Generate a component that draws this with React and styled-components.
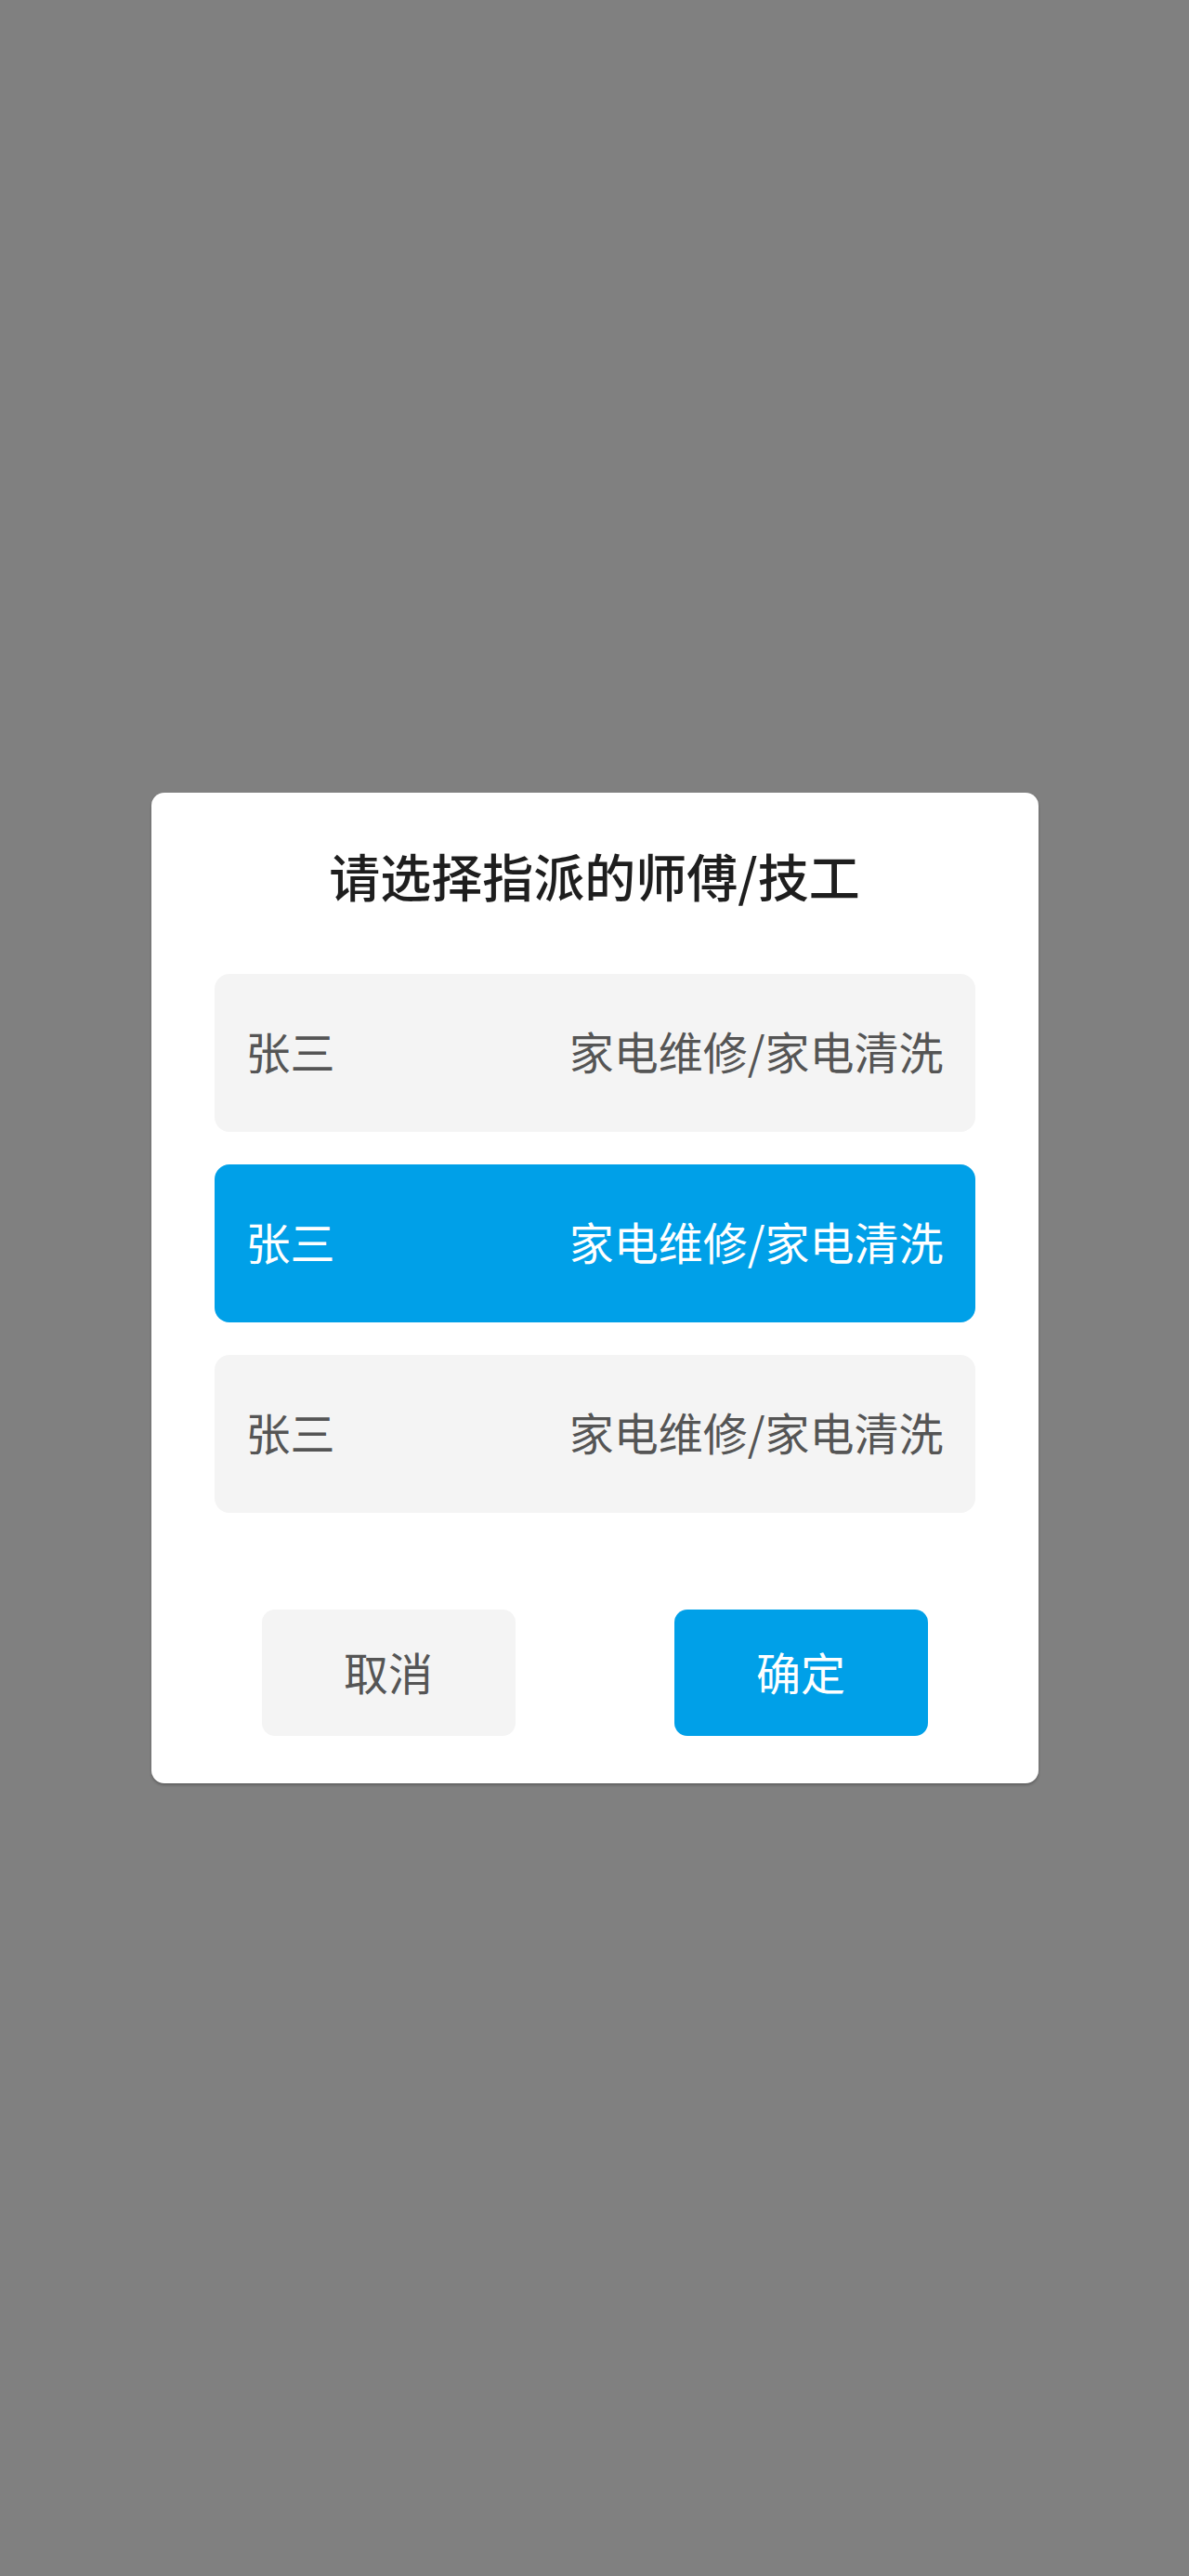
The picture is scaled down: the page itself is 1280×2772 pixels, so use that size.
import React, { useState } from "react";
import styled, { createGlobalStyle } from "styled-components";

const GlobalStyle = createGlobalStyle`
  html, body {
    margin: 0;
    padding: 0;
  }
  body {
    font-family: "Noto Sans CJK SC", "Noto Sans", sans-serif;
    background: #808080;
  }
`;

const workers = [
  { id: 1, name: "张三", skill: "家电维修/家电清洗" },
  { id: 2, name: "张三", skill: "家电维修/家电清洗" },
  { id: 3, name: "张三", skill: "家电维修/家电清洗" },
];

const App = () => {
  const [selected, setSelected] = useState(2);

  return (
    <>
      <GlobalStyle />
      <Mask>
        <Dialog>
          <Title>请选择指派的师傅/技工</Title>
          <List>
            {workers.map((w) => (
              <Row
                key={w.id}
                $active={selected === w.id}
                onClick={() => setSelected(w.id)}
              >
                <span>{w.name}</span>
                <span>{w.skill}</span>
              </Row>
            ))}
          </List>
          <Footer>
            <Button>取消</Button>
            <Button $primary>确定</Button>
          </Footer>
        </Dialog>
      </Mask>
    </>
  );
};

const Mask = styled.div`
  min-height: 100vh;
  background: #808080;
  display: flex;
  align-items: center;
  justify-content: center;
`;

const Dialog = styled.div`
  width: 955px;
  box-sizing: border-box;
  background: #fff;
  border-radius: 14px;
  box-shadow: 0 2px 3px rgba(0, 0, 0, 0.25);
  padding: 48px 0 51px;
  display: flex;
  flex-direction: column;
  align-items: center;
`;

const Title = styled.div`
  font-size: 55px;
  line-height: 80px;
  font-weight: 500;
  color: #1e1e1e;
  text-align: center;
`;

const List = styled.div`
  width: 819px;
  margin-top: 67px;
  display: flex;
  flex-direction: column;
  gap: 35px;
`;

const Row = styled.div`
  height: 170px;
  box-sizing: border-box;
  padding: 0 34px 6px;
  border-radius: 16px;
  display: flex;
  align-items: center;
  justify-content: space-between;
  font-size: 48px;
  cursor: pointer;
  background: ${({ $active }) => ($active ? "#00a0e8" : "#f4f4f4")};
  color: ${({ $active }) => ($active ? "#fff" : "#555")};
`;

const Footer = styled.div`
  width: 100%;
  box-sizing: border-box;
  margin-top: 104px;
  padding: 0 119px;
  display: flex;
  justify-content: space-between;
`;

const Button = styled.div`
  width: 273px;
  height: 136px;
  box-sizing: border-box;
  padding-bottom: 4px;
  border-radius: 14px;
  display: flex;
  align-items: center;
  justify-content: center;
  font-size: 48px;
  cursor: pointer;
  background: ${({ $primary }) => ($primary ? "#00a0e8" : "#f4f4f4")};
  color: ${({ $primary }) => ($primary ? "#fff" : "#555")};
`;

export default App;
